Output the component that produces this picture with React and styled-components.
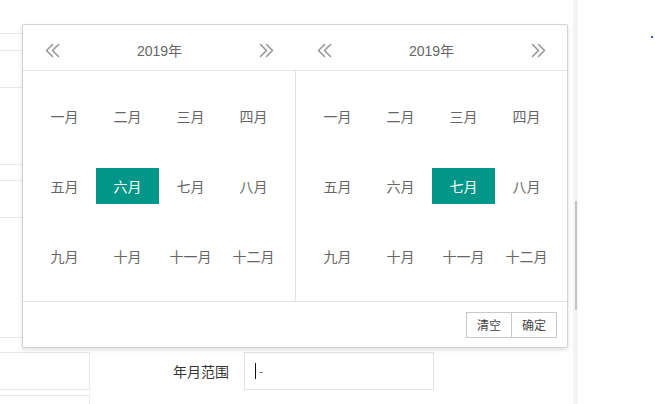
import React from "react";
import styled, { createGlobalStyle } from "styled-components";

const GlobalStyle = createGlobalStyle`
  html, body {
    margin: 0;
    padding: 0;
    background: #fff;
    overflow: hidden;
  }
  body {
    font-family: "Liberation Sans", Arial, "Noto Sans CJK SC", sans-serif;
  }
`;

const MONTHS = [
  "一月", "二月", "三月", "四月",
  "五月", "六月", "七月", "八月",
  "九月", "十月", "十一月", "十二月",
];

//Background form rows: gap above, border style, label
const ROWS = [
  { gap: -4, kind: "line" },
  { gap: 16, kind: "box" },
  { gap: 39, kind: "flat" },
  { gap: 15, kind: "box" },
  { gap: 82, kind: "flat" },
  { gap: 14, kind: "box", label: "年月范围" },
  { gap: 5, kind: "box" },
];

const DoubleChevron = ({ dir }) => (
  <svg width="17" height="15" viewBox="0 0 17 15" fill="none">
    <g
      stroke="#959595"
      strokeWidth="1.5"
      strokeLinecap="round"
      strokeLinejoin="round"
      transform={dir === "right" ? "translate(17 0) scale(-1 1)" : undefined}
    >
      <path d="M8.5 1.5 L2.5 7.5 L8.5 13.5" />
      <path d="M14.5 1.5 L8.5 7.5 L14.5 13.5" />
    </g>
  </svg>
);

const Panel = ({ selected, second }) => (
  <Main>
    <Header>
      <Nav>
        <DoubleChevron dir="left" />
      </Nav>
      <Year>2019年</Year>
      <Nav>
        <DoubleChevron dir="right" />
      </Nav>
    </Header>
    <Content $divider={second}>
      <MonthGrid>
        {MONTHS.map((m, i) => (
          <Month key={m} $active={i === selected}>
            {m}
          </Month>
        ))}
      </MonthGrid>
    </Content>
  </Main>
);

const App = () => {
  return (
    <Page>
      <GlobalStyle />
      <Workspace>
        <Form>
          {ROWS.map((r, i) => (
            <FormRow key={i} style={{ marginTop: r.gap }}>
              <Field $kind={r.kind} />
              {r.label && (
                <>
                  <Label>{r.label}</Label>
                  <RangeInput>
                    <Caret />
                    <Dash>-</Dash>
                  </RangeInput>
                </>
              )}
            </FormRow>
          ))}
        </Form>
      </Workspace>
      <Track>
        <Thumb />
      </Track>
      <Aside>
        <Dot />
      </Aside>

      <Picker>
        <Range>
          <Panel selected={5} />
          <Panel selected={6} second />
        </Range>
        <Footer>
          <Btn>清空</Btn>
          <Btn>确定</Btn>
        </Footer>
      </Picker>
    </Page>
  );
};

const Page = styled.div`
  position: relative;
  display: flex;
  width: 655px;
  height: 404px;
  overflow: hidden;
`;

const Workspace = styled.div`
  width: 573px;
  flex-shrink: 0;
`;

const Form = styled.div`
  display: flex;
  flex-direction: column;
`;

const FormRow = styled.div`
  display: flex;
  align-items: center;
  height: 38px;
  flex-shrink: 0;
`;

const Field = styled.div`
  box-sizing: border-box;
  width: 90px;
  height: 38px;
  border: 1px solid #e9e9e9;
  border-left: none;
  border-top-color: ${(p) => (p.$kind === "box" ? "#e9e9e9" : "transparent")};
  border-right-color: ${(p) => (p.$kind === "line" ? "transparent" : "#e9e9e9")};
`;

const Label = styled.label`
  box-sizing: border-box;
  width: 154px;
  padding-right: 15px;
  text-align: right;
  font-size: 14px;
  color: #333;
`;

const RangeInput = styled.div`
  box-sizing: border-box;
  display: flex;
  align-items: center;
  width: 190px;
  height: 38px;
  padding-left: 10px;
  border: 1px solid #e2e2e2;
  font-size: 13px;
  color: #777;
`;

const Caret = styled.span`
  width: 1px;
  height: 16px;
  background: #111;
  margin-right: 3px;
`;

const Dash = styled.span`
  line-height: 1;
`;

const Track = styled.div`
  width: 5px;
  flex-shrink: 0;
  background: #f4f4f4;
  display: flex;
  justify-content: center;
`;

const Thumb = styled.div`
  width: 2px;
  height: 109px;
  margin-top: 201px;
  background: #c4c4c4;
`;

const Aside = styled.div`
  flex: 1;
  position: relative;
`;

const Dot = styled.span`
  position: absolute;
  left: 73px;
  top: 36px;
  width: 2px;
  height: 2px;
  background: #3b4fd6;
`;

//Date picker popup
const Picker = styled.div`
  position: absolute;
  left: 22px;
  top: 24px;
  width: 546px;
  box-sizing: border-box;
  background: #fff;
  border: 1px solid #d2d2d2;
  border-radius: 2px;
  box-shadow: 0 2px 4px rgba(0, 0, 0, 0.12);
`;

const Range = styled.div`
  display: flex;
`;

const Main = styled.div`
  width: 272px;
`;

const Header = styled.div`
  display: flex;
  align-items: center;
  justify-content: space-between;
  height: 46px;
  padding: 0 20px 0 21px;
  box-sizing: border-box;
  border-bottom: 1px solid #e2e2e2;
`;

const Nav = styled.span`
  display: flex;
  width: 17px;
  height: 15px;
  margin-top: 5px;
`;

const Year = styled.span`
  font-size: 14px;
  color: #666;
  margin-top: 5px;
`;

const Content = styled.div`
  padding: 10px;
  border-left: ${(p) => (p.$divider ? "1px solid #e2e2e2" : "none")};
`;

const MonthGrid = styled.div`
  display: grid;
  grid-template-columns: repeat(4, 63px);
  row-gap: 34px;
  padding: 17px 0;
`;

const Month = styled.div`
  height: 36px;
  display: flex;
  align-items: center;
  justify-content: center;
  font-size: 14px;
  color: ${(p) => (p.$active ? "#fff" : "#666")};
  background: ${(p) => (p.$active ? "#009688" : "transparent")};
`;

const Footer = styled.div`
  display: flex;
  justify-content: flex-end;
  height: 46px;
  box-sizing: border-box;
  padding: 10px;
  border-top: 1px solid #e2e2e2;
`;

const Btn = styled.span`
  height: 26px;
  line-height: 26px;
  padding: 0 10px;
  margin-left: -1px;
  border: 1px solid #c9c9c9;
  box-sizing: border-box;
  font-size: 12px;
  color: #444;
  background: #fff;
`;

export default App;
